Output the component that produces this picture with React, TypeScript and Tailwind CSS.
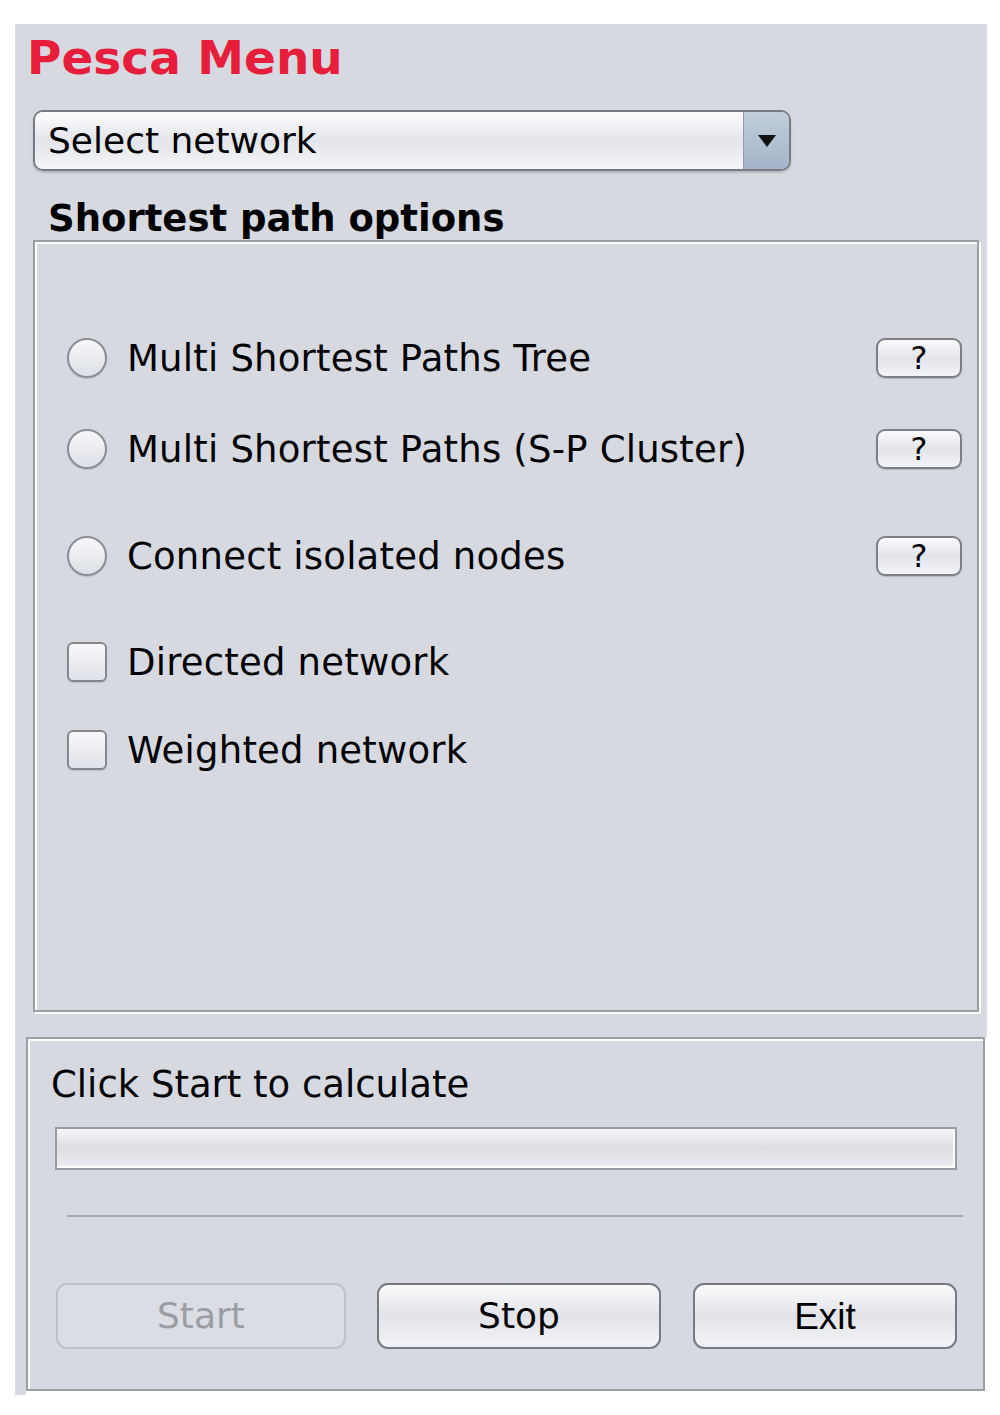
const font = { fontFamily: '"DejaVu Sans", Verdana, sans-serif' };

const HelpButton = () => (
  <button className="h-[40px] w-[86px] rounded-[9px] border-2 border-[#7c7f86] bg-gradient-to-b from-[#fbfbfd] via-[#e2e4ea] to-[#f2f4f8] text-[32px] leading-none text-black shadow-[0_1px_1px_rgba(0,0,0,0.15)]">
    ?
  </button>
);

const Radio = () => (
  <span className="block h-[40px] w-[40px] shrink-0 rounded-full border-2 border-[#8c8e94] bg-gradient-to-b from-[#f6f7f9] to-[#dde0e6] shadow-[0_1px_1px_rgba(0,0,0,0.12)]" />
);

const Checkbox = () => (
  <span className="block h-[40px] w-[40px] shrink-0 rounded-[6px] border-2 border-[#85878d] bg-gradient-to-b from-[#f7f8fa] to-[#dfe2e8] shadow-[0_1px_1px_rgba(0,0,0,0.12)]" />
);

const OptionRow = ({
  label,
  kind,
  help,
  className,
}: {
  label: string;
  kind: "radio" | "check";
  help?: boolean;
  className: string;
}) => (
  <div className={`flex h-[40px] items-center justify-between pl-[32px] pr-[15px] ${className}`}>
    <div className="flex items-center gap-[20px]">
      {kind === "radio" ? <Radio /> : <Checkbox />}
      <span className="text-[37px] leading-none tracking-[0.2px] text-black">{label}</span>
    </div>
    {help && <HelpButton />}
  </div>
);

export default function App() {
  return (
    <div className="min-h-[1415px] bg-white pl-[15px] pt-[24px]" style={font}>
      <div className="w-[972px]">
        {/* top area */}
        <div className="h-[1013px] bg-[#d6d9e0] pt-[10px]">
          <h1 className="pl-[12px] text-[47px] font-bold leading-none text-[#e61e3c]">Pesca Menu</h1>

          {/* network select */}
          <div className="ml-[18px] mt-[29px] flex h-[61px] w-[758px] overflow-hidden rounded-[10px] border-2 border-[#777a82] shadow-[0_2px_2px_rgba(0,0,0,0.15)]">
            <div className="flex flex-1 items-center bg-gradient-to-b from-[#fdfdfe] via-[#e3e5ea] to-[#f4f5f8] pl-[13px] text-[36px] leading-none text-black">
              Select network
            </div>
            <div className="flex w-[46px] items-center justify-center border-l border-[#8e9bb0] bg-gradient-to-b from-[#c2cedc] to-[#a4b4c9]">
              <svg width="20" height="14" viewBox="0 0 20 14">
                <path d="M1 1h18L10 13z" fill="#111" />
              </svg>
            </div>
          </div>

          <h2 className="ml-[33px] mt-[29px] text-[37px] font-bold leading-none text-black">Shortest path options</h2>

          {/* options panel */}
          <div className="ml-[18px] mt-[3px] h-[772px] w-[946px] border-2 border-[#9c9ea6] pt-[96px] shadow-[inset_2px_2px_0_#fff,2px_2px_0_#fff]">
            <OptionRow kind="radio" label="Multi Shortest Paths Tree" help className="" />
            <OptionRow kind="radio" label="Multi Shortest Paths (S-P Cluster)" help className="mt-[51px]" />
            <OptionRow kind="radio" label="Connect isolated nodes" help className="mt-[67px]" />
            <OptionRow kind="check" label="Directed network" className="mt-[66px]" />
            <OptionRow kind="check" label="Weighted network" className="mt-[48px]" />
          </div>
        </div>

        {/* bottom area */}
        <div className="flex">
          <div className="h-[358px] w-[11px] bg-[#d6d9e0]" />
          <div className="h-[354px] w-[959px] border-2 border-[#9c9ea6] bg-[#d6d9e0] pl-[23px] pt-[27px] shadow-[inset_2px_2px_0_#fff]">
            <p className="text-[37px] leading-none text-black">Click Start to calculate</p>
            <div className="ml-[4px] mt-[24px] h-[43px] w-[902px] border-2 border-[#9a9ca4] bg-gradient-to-b from-[#f4f5f7] via-[#dcdee3] to-[#eceef1] shadow-[inset_-2px_-2px_0_#fff]" />
            <div className="ml-[16px] mt-[45px] h-[2px] w-[896px] bg-[#a7a9b0]" />
            <div className="ml-[5px] mt-[66px] flex gap-[31px]">
              <button className="h-[66px] w-[290px] rounded-[11px] border-2 border-[#bfc1c6] bg-[#dadde3] text-[36px] leading-none text-[#9b9da2]">
                Start
              </button>
              <button className="h-[66px] w-[284px] rounded-[11px] border-2 border-[#76797f] bg-gradient-to-b from-[#fbfbfd] via-[#e1e3e8] to-[#f3f4f7] text-[36px] leading-none text-black">
                Stop
              </button>
              <button
                className="ml-[1px] h-[66px] w-[264px] rounded-[11px] border-2 border-[#76797f] bg-gradient-to-b from-[#fbfbfd] via-[#e1e3e8] to-[#f3f4f7] text-[37px] leading-none text-black"
                style={{ fontFamily: '"Liberation Sans", Arial, sans-serif' }}
              >
                Exit
              </button>
            </div>
          </div>
        </div>
      </div>
    </div>
  );
}
